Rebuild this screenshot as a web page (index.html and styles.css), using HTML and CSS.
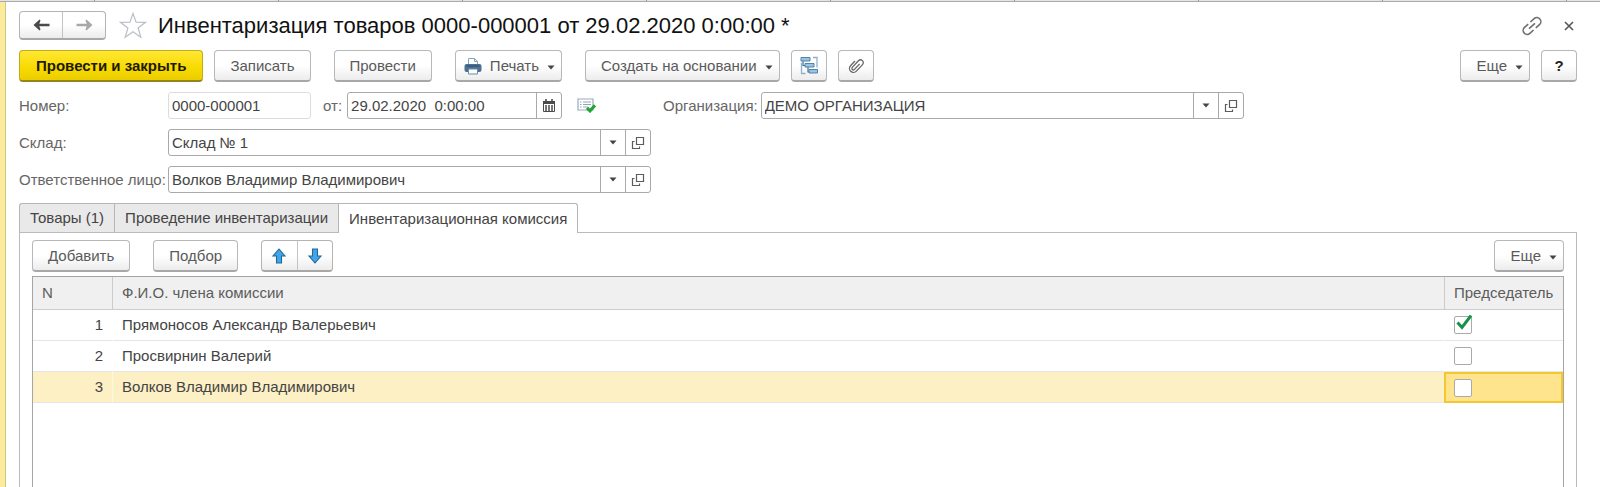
FILE: index.html
```html
<!DOCTYPE html>
<html lang="ru">
<head>
<meta charset="utf-8">
<meta name="viewport" content="width=device-width, initial-scale=1">
<title>Инвентаризация товаров</title>
<link rel="stylesheet" href="styles.css">
</head>
<body>
<svg width="0" height="0" class="defs" aria-hidden="true">
  <symbol id="caret" viewBox="0 0 8 5"><path d="M0.5 0.5h7L4 4.5z" fill="#444"/></symbol>
  <symbol id="open" viewBox="0 0 14 14"><path d="M5.500 1.500h7v7h-7zM3.500 5.500h-2v7h7v-2" fill="none" stroke="#5c5c5c" stroke-width="1.200"/></symbol>
</svg>
<div class="window-tabs"><i></i><i></i><i></i><i></i><i></i><i></i><i></i><i></i><i></i><i></i></div>
<main class="form">
  <header class="title-bar">
    <div class="split nav">
      <button type="button" aria-label="Назад"><svg width="17" height="12" viewBox="0 0 17 12"><path d="M0.500 6L6.500 0.500L7.500 1.500L6.300 4.700H16.500V7.300H6.300L7.500 10.500L6.500 11.500z" fill="#4a4a4a"/></svg></button>
      <button type="button" aria-label="Вперед"><svg width="17" height="12" viewBox="0 0 17 12"><path d="M16.500 6L10.500 0.500L9.500 1.500L10.700 4.700H0.500V7.300H10.700L9.500 10.500L10.500 11.500z" fill="#a8a8a8"/></svg></button>
    </div>
    <button type="button" class="plain star" aria-label="В избранное"><svg width="28" height="27" viewBox="0 0 28 27"><path d="M14 1.500l3.100 8.600 9.400.2-7.400 5.700 2.700 9.200-7.800-5.400-7.800 5.400 2.700-9.200L1.500 10.300l9.400-.2z" fill="#fff" stroke="#b9bfc4" stroke-width="1.200"/></svg></button>
    <h1>Инвентаризация товаров 0000-000001 от 29.02.2020 0:00:00 *</h1>
    <div class="window-actions">
      <button type="button" class="plain" aria-label="Получить ссылку"><svg width="20" height="20" viewBox="0 0 20 20"><g transform="rotate(-42 10 10)" fill="none" stroke="#707070" stroke-width="1.600"><path d="M8.500 6H3.500a4 4 0 0 0 0 8h5M11.500 6h5a4 4 0 0 1 0 8h-5M6 10h8"/></g></svg></button>
      <button type="button" class="plain" aria-label="Закрыть"><svg width="10" height="10" viewBox="0 0 10 10"><path d="M1 1l8 8M9 1L1 9" stroke="#555" stroke-width="1.600"/></svg></button>
    </div>
  </header>

  <div class="commands">
    <button type="button" class="btn primary">Провести и закрыть</button>
    <button type="button" class="btn">Записать</button>
    <button type="button" class="btn apart">Провести</button>
    <button type="button" class="btn apart drop print"><svg width="18" height="18" viewBox="0 0 18 18"><path d="M4.500 8V1.500h6l3 3V8" fill="#fff" stroke="#8ba3b8"/><path d="M10.500 1.500v3h3" fill="none" stroke="#8ba3b8"/><rect x="0.500" y="7" width="17" height="8" rx="2" fill="#4d7195"/><path d="M2.500 9h13" stroke="#2f4d6c"/><path d="M4.500 12h9v5h-9z" fill="#fff" stroke="#6d8aa5"/></svg>Печать<svg class="caret"><use href="#caret"/></svg></button>
    <button type="button" class="btn apart drop">Создать на основании<svg class="caret"><use href="#caret"/></svg></button>
    <button type="button" class="btn icon" aria-label="Структура подчиненности"><svg width="18" height="19" viewBox="0 0 18 19"><path d="M13 1.500h4v10M1.500 7v10.500h4" fill="none" stroke="#8db1cc" stroke-width="1.300"/><path d="M3 5v4.500h3M8 11v5h3" fill="none" stroke="#3f7299" stroke-width="1.200"/><g fill="#9cc4e2" stroke="#5083aa"><path d="M1 1.500h9V5H1zM5 7.500h9V11H5zM9 13.500h8.500V17H9z"/></g></svg></button>
    <button type="button" class="btn icon" aria-label="Присоединенные файлы"><svg width="18" height="18" viewBox="0 0 18 18"><path transform="rotate(43 9 9)" d="M4.800 6v6.500a4 4 0 0 0 8 0V3.500a2.800 2.800 0 0 0-5.600 0V12.500a1.500 1.500 0 0 0 3 0V5" fill="none" stroke="#666" stroke-width="1.300"/></svg></button>
    <button type="button" class="btn drop more">Еще<svg class="caret"><use href="#caret"/></svg></button>
    <button type="button" class="btn icon help">?</button>
  </div>

  <div class="field-row">
    <label for="number">Номер:</label>
    <div class="field number"><input id="number" value="0000-000001" readonly></div>
    <label class="from" for="date">от:</label>
    <div class="field date"><input id="date" value="29.02.2020  0:00:00"><button type="button" aria-label="Календарь"><svg width="12" height="13" viewBox="0 0 12 13"><path d="M0.500 2.500h11v10h-11z" fill="#fff" stroke="#4b4b4b"/><path d="M0 2h12v3H0z" fill="#4b4b4b"/><path d="M3 0v3.500M9 0v3.500" stroke="#4b4b4b" stroke-width="1.600"/><path d="M2 7h8M2 9h8M2 11h8" stroke="#4b4b4b" stroke-width="1.300" stroke-dasharray="2 1"/></svg></button></div>
    <svg class="posted" width="19" height="15" viewBox="0 0 19 15" role="img" aria-label="Проведен"><path d="M1 1h15v11H1z" fill="#fff" stroke="#9aabba" stroke-width="1.200"/><path d="M3 4h1.500M6 4h8M3 6.500h1.500M6 6.500h8M3 9h1.500M6 9h5" stroke="#8fa6b8" stroke-width="1.100"/><path d="M10 9.800l3 3 5-5.500" fill="none" stroke="#23a536" stroke-width="3.200"/></svg>
    <label class="org" for="org">Организация:</label>
    <div class="field wide"><input id="org" role="combobox" aria-expanded="false" value="ДЕМО ОРГАНИЗАЦИЯ"><button type="button" aria-label="Выбрать"><svg class="caret"><use href="#caret"/></svg></button><button type="button" aria-label="Открыть"><svg width="14" height="14"><use href="#open"/></svg></button></div>
  </div>
  <div class="field-row">
    <label for="store">Склад:</label>
    <div class="field wide"><input id="store" role="combobox" aria-expanded="false" value="Склад № 1"><button type="button" aria-label="Выбрать"><svg class="caret"><use href="#caret"/></svg></button><button type="button" aria-label="Открыть"><svg width="14" height="14"><use href="#open"/></svg></button></div>
  </div>
  <div class="field-row">
    <label for="person">Ответственное лицо:</label>
    <div class="field wide"><input id="person" role="combobox" aria-expanded="false" value="Волков Владимир Владимирович"><button type="button" aria-label="Выбрать"><svg class="caret"><use href="#caret"/></svg></button><button type="button" aria-label="Открыть"><svg width="14" height="14"><use href="#open"/></svg></button></div>
  </div>

  <div class="tabs" role="tablist">
    <button type="button" role="tab" aria-selected="false">Товары (1)</button>
    <button type="button" role="tab" aria-selected="false">Проведение инвентаризации</button>
    <button type="button" role="tab" aria-selected="true">Инвентаризационная комиссия</button>
  </div>
  <section class="panel" role="tabpanel">
    <div class="commands">
      <button type="button" class="btn">Добавить</button>
      <button type="button" class="btn apart">Подбор</button>
      <div class="split move apart">
        <button type="button" aria-label="Вверх"><svg width="14" height="16" viewBox="0 0 14 16"><path d="M7 1l6 7H9.500v7h-5V8H1z" fill="#41a6e6" stroke="#21699c" stroke-width="1.100"/></svg></button>
        <button type="button" aria-label="Вниз"><svg width="14" height="16" viewBox="0 0 14 16"><path d="M7 15l6-7H9.500V1h-5v7H1z" fill="#41a6e6" stroke="#21699c" stroke-width="1.100"/></svg></button>
      </div>
      <button type="button" class="btn drop more">Еще<svg class="caret"><use href="#caret"/></svg></button>
    </div>
    <div class="grid">
      <table>
        <thead><tr><th class="num">N</th><th>Ф.И.О. члена комиссии</th><th class="chair">Председатель</th></tr></thead>
        <tbody>
          <tr><td>1</td><td>Прямоносов Александр Валерьевич</td><td><span class="check"><input type="checkbox" checked aria-label="Председатель: Прямоносов Александр Валерьевич"><svg width="16" height="15" viewBox="0 0 16 15"><path d="M1.500 7.500l4.500 5L15 0.500" fill="none" stroke="#16904b" stroke-width="3"/></svg></span></td></tr>
          <tr><td>2</td><td>Просвирнин Валерий</td><td><span class="check"><input type="checkbox" aria-label="Председатель: Просвирнин Валерий"></span></td></tr>
          <tr class="current"><td>3</td><td>Волков Владимир Владимирович</td><td><span class="check"><input type="checkbox" aria-label="Председатель: Волков Владимир Владимирович"></span></td></tr>
        </tbody>
      </table>
    </div>
  </section>
</main>
</body>
</html>
```
FILE: styles.css
```css
* { box-sizing: border-box; }
body {
  margin: 0;
  min-height: 100vh;
  display: flex;
  flex-direction: column;
  background: #fff;
  color: #444;
  font: 15px/20px "Liberation Sans", Arial, sans-serif;
}
button, input { font: inherit; color: inherit; }
button { padding: 0; }
svg { display: block; flex: none; }
.defs { position: absolute; }
.caret { width: 8px; height: 5px; }

.window-tabs {
  display: flex;
  height: 2px;
  overflow: hidden;
  background: #e4e4e4;
  border-bottom: 1px solid #aaa;
}
.window-tabs i { flex: 0 0 184px; border-right: 1px solid #999; }
.window-tabs i:first-child { flex-basis: 95px; }

.form {
  flex: 1;
  display: flex;
  flex-direction: column;
  padding: 9px 23px 0 14px;
  border-left: 5px solid #fbeb9b;
  box-shadow: inset 1px 0 #d0c58c;
}

.title-bar { display: flex; align-items: center; height: 29px; margin-bottom: 10px; }
.split { display: flex; border: 1px solid #b4b4b4; border-bottom: 2px solid #a8a8a8; border-radius: 4px; background: linear-gradient(#fff 50%, #ececec); }
.split button { flex: 1; display: flex; align-items: center; justify-content: center; border: 0; background: none; }
.split button + button { border-left: 1px solid #c4c4c4; }
.nav { width: 87px; height: 29px; }
.move { width: 72px; }
.plain { display: flex; border: 0; background: none; }
.star { margin: 0 11px 0 13px; }
h1 { margin: 0; font-size: 22px; line-height: 28px; font-weight: 400; color: #111; white-space: nowrap; }
.window-actions { display: flex; align-items: center; gap: 22px; margin: 0 3px 0 auto; }

.commands { display: flex; gap: 11px; }
.btn {
  display: flex;
  align-items: center;
  justify-content: center;
  height: 32px;
  padding: 0 15px;
  border: 1px solid #b8b8b8;
  border-bottom: 2px solid #a8a8a8;
  border-radius: 4px;
  background: linear-gradient(#fff 50%, #ececec);
  color: #5a5a5a;
  white-space: nowrap;
}
.primary { padding: 0 16px; border-color: #c4ab1c; border-bottom-color: #94841d; background: linear-gradient(#ffe733, #f7da00 60%, #ebcd00); color: #1e1a00; font-weight: 700; }
.apart { margin-left: 12px; }
.drop { gap: 8px; padding-right: 6px; }
.drop .caret { margin-top: 3px; }
.print { padding-left: 8px; }
.icon { width: 36px; padding: 0; }
.more { margin-left: auto; }
.help { color: #222; font-weight: 700; }

.field-row { display: flex; align-items: center; margin-top: 10px; color: #666; }
.field-row label { white-space: nowrap; }
.field-row > label:first-child { width: 149px; }
.field { display: flex; height: 27px; border: 1px solid #a9a9a9; border-radius: 3px; background: #fff; overflow: hidden; }
.field input { flex: 1; min-width: 0; padding: 0 3px; border: 0; background: none; color: #444; outline: 0; white-space: pre; }
.field button { display: flex; align-items: center; justify-content: center; width: 25px; border: 0; border-left: 1px solid #a9a9a9; background: none; }
.number { width: 143px; border-color: #ddd; }
.from { margin: 0 5px 0 12px; }
.date { width: 215px; }
.posted { margin: 0 67px 0 15px; }
.org { margin-right: 3px; }
.wide { width: 483px; }

.tabs { display: flex; margin-top: 10px; }
.tabs button { height: 29px; padding: 0 10px; border: 1px solid #b5b5b5; border-right-width: 0; border-bottom: 0; background: #e9e9e9; white-space: nowrap; }
.tabs button:first-child { border-top-left-radius: 3px; }
.tabs button[aria-selected="true"] { height: 30px; margin-bottom: -1px; border-right-width: 1px; border-top-right-radius: 3px; background: #fff; z-index: 1; }
.panel { flex: 1; display: flex; flex-direction: column; padding: 7px 12px 0; border: 1px solid #bbb; border-bottom: 0; }
.grid { flex: 1; margin-top: 4px; border: 1px solid #a5a5a5; border-bottom: 0; }
table { width: 100%; table-layout: fixed; border-collapse: separate; border-spacing: 0; }
th, td { height: 31px; padding: 0 9px; text-align: left; border-bottom: 1px solid #e6e6e6; white-space: nowrap; }
th { height: 33px; font-weight: 400; color: #5c5c5c; background: #f0f0f0; border-bottom-color: #ccc; }
th + th { border-left: 1px solid #ccc; }
td + td { border-left: 1px solid transparent; }
.num { width: 79px; }
.chair { width: 119px; }
td:first-child { text-align: right; }
.current td { background: #fdf0c4; border-left-color: #fff8e0; background-clip: padding-box; }
.current td:last-child { background: #fde48d; border: 2px solid #f2c730; padding-left: 8px; }
.check { display: block; width: 18px; height: 18px; position: relative; }
.check input { display: block; appearance: none; width: 18px; height: 18px; margin: 0; border: 1px solid #aaa; border-radius: 2px; background: #fff; }
.check svg { position: absolute; left: 2px; top: -1px; pointer-events: none; }
```
